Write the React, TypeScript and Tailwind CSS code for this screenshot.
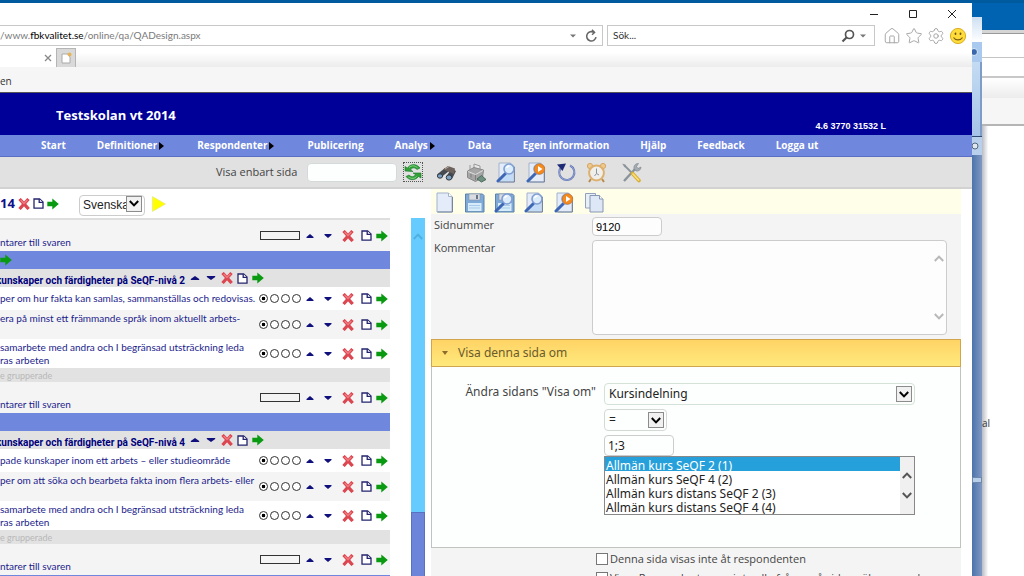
import React, { useState } from 'react';
import { Home, Settings, Star } from 'lucide-react';

type IconProps = { className?: string };

function DeleteIcon() {
  return (
    <svg width="12" height="12" viewBox="0 0 12 12">
      <path d="M2.6 2.2 9.6 9.8M9.4 2.2 2.6 9.8" stroke="#dc4650" strokeWidth="3.2" strokeLinecap="square" />
      <path d="M2.6 2 6 5.4 9.4 2" stroke="#f07a80" strokeWidth="1.4" fill="none" />
    </svg>
  );
}

function PageIcon() {
  return (
    <svg width="11" height="11" viewBox="0 0 11 11" fill="#fff" stroke="#24246e" strokeWidth="1.3">
      <path d="M1 1h5.6L10 4v6.2H1z" />
      <path d="M6.2 1v3.4H10" />
    </svg>
  );
}

function ArrowIcon() {
  return (
    <svg width="12" height="12" viewBox="0 0 12 12">
      <path d="M.3 3.800h5V.5L11.800 6l-6.500 5.500V8.200h-5z" fill="#0a9a12" />
    </svg>
  );
}

function UpIcon({ className = '' }: IconProps) {
  return (
    <svg width="10" height="4" viewBox="0 0 10 4" preserveAspectRatio="none" className={className}>
      <path d="M5 0 8.5 3v1h-7V3z" fill="#10107c" />
    </svg>
  );
}

function DownIcon({ className = '' }: IconProps) {
  return (
    <svg width="10" height="4" viewBox="0 0 10 4" preserveAspectRatio="none" className={className}>
      <path d="M5 4 8.5 1V0h-7v1z" fill="#10107c" />
    </svg>
  );
}

function Chevron({ up = false, className = '' }: IconProps & { up?: boolean }) {
  return (
    <svg width="10" height="7" viewBox="0 0 10 7" fill="none" stroke="currentColor" strokeWidth="2" className={className}>
      <path d={up ? 'M.8 6 5 1.6 9.2 6' : 'M.8 1 5 5.4 9.2 1'} />
    </svg>
  );
}

function Sheet() {
  return (
    <>
      <path d="M3 1h11.5L18 4.5V20H3z" fill="#e3ecf8" stroke="#a4b2cb" />
      <path d="M14.5 1v3.5H18" fill="#fff" stroke="#a4b2cb" />
      <path d="M3.5 20H18.5V5" fill="none" stroke="#77869f" />
    </>
  );
}

function Lens() {
  return (
    <>
      <path d="M9.5 11.5 2 19" stroke="#3d67b5" strokeWidth="3" strokeLinecap="round" />
      <circle cx="13" cy="7" r="5" fill="#dcecfb" stroke="#7f9ed4" strokeWidth="1.6" />
      <path d="M10.5 6a3 3 0 0 1 3-2" fill="none" stroke="#fff" strokeWidth="1.4" />
    </>
  );
}

function Floppy() {
  return (
    <>
      <path d="M1.5 2h17L20 3.5V20H1.5z" fill="#7fa9d6" stroke="#5b82ae" />
      <path d="M5 2h11v6H5z" fill="#d9dde2" stroke="#8796a8" strokeWidth=".6" />
      <path d="M12 3h2v4h-2z" fill="#6a7480" />
      <path d="M4 11h13.500v8H4z" fill="#d7ecfa" />
      <path d="M5 13.500h11M5 16h11" stroke="#a7cbe8" />
    </>
  );
}

function ToolSvg({ children }: { children: React.ReactNode }) {
  return (
    <svg width="21" height="21" viewBox="0 0 21 21" fill="none">
      {children}
    </svg>
  );
}

const PREVIEW = (
  <ToolSvg>
    <Sheet />
    <path d="M5 18 12 11h5v8H5z" fill="#c2dcf7" />
    <Lens />
  </ToolSvg>
);

const PREVIEW_PLAY = (
  <ToolSvg>
    <Sheet />
    <Lens />
    <circle cx="13.500" cy="7" r="5.200" fill="#f58a1f" stroke="#cf6f17" strokeWidth=".6" />
    <path d="M12 4v6l4.500-3z" fill="#fff" />
  </ToolSvg>
);

const MAIN_TOOLS = [
  {
    name: 'Sök',
    icon: (
      <ToolSvg>
        <path d="M1 12.500 9 6l4 3-7.500 6zM10 15l5.500-8.500L20 9l-4 8z" fill="#454b52" />
        <path d="M7 7.500 12 4l7 2.500-1 5.500z" fill="#6d625c" />
        <path d="M9 7l4-2.500" stroke="#b9a89b" />
        <ellipse cx="4" cy="14" rx="2.600" ry="2.200" fill="#7ba2c4" stroke="#33383e" />
        <ellipse cx="13" cy="15.500" rx="2.800" ry="2.600" fill="#7ba2c4" stroke="#33383e" />
      </ToolSvg>
    ),
  },
  {
    name: 'Skriv ut',
    icon: (
      <ToolSvg>
        <path d="M8 2 14 4v6l-6-1z" fill="#e8e8e8" stroke="#999" />
        <path d="M1.500 9 8 5.500 17.500 8l-1 7.500-7 4-8-4z" fill="#a6a6a6" stroke="#888" />
        <path d="M2 9.500l7.500 3 7.500-4" stroke="#ddd" />
        <path d="M5 12v3.500M9.500 13v5" stroke="#7d7d7d" />
        <path d="M11 17l4.500-3.500 4.500 4-4.500 2.500z" fill="#6e9181" stroke="#4d6b5c" />
        <path d="M4 3v5" stroke="#999" />
      </ToolSvg>
    ),
  },
  { name: 'Förhandsgranska', icon: PREVIEW },
  { name: 'Spela upp', icon: PREVIEW_PLAY },
  {
    name: 'Ångra',
    icon: (
      <ToolSvg>
        <path d="M6 4.500a7.600 7.600 0 1 0 8-1" stroke="#6478b6" strokeWidth="2" />
        <path d="M6 4.500a7.600 7.600 0 1 0 8-1" stroke="#aebce2" strokeWidth=".6" />
        <path d="M1 2.500 10 1.500 6.500 9z" fill="#1f2b75" />
      </ToolSvg>
    ),
  },
  {
    name: 'Tid',
    icon: (
      <ToolSvg>
        <path d="M5 17 3 20M16 17l2 3" stroke="#b98c4c" strokeWidth="2" />
        <circle cx="4" cy="4" r="2.600" fill="#efc88d" stroke="#d3a665" />
        <circle cx="17" cy="4" r="2.600" fill="#efc88d" stroke="#d3a665" />
        <circle cx="10.500" cy="11" r="7.400" fill="#f1efe9" stroke="#ddb070" strokeWidth="2" />
        <path d="M10.500 6.500v5l-2 2.500M10.500 11.500l2.500 1.500" stroke="#8d93a5" />
      </ToolSvg>
    ),
  },
];

const PAGE_TOOLS = [
  { name: 'Ny', icon: <ToolSvg><Sheet /></ToolSvg> },
  { name: 'Spara', icon: <ToolSvg><Floppy /></ToolSvg> },
  { name: 'Spara och visa', icon: <ToolSvg><Floppy /><Lens /></ToolSvg> },
  { name: 'Visa', icon: PREVIEW },
  { name: 'Visa och kör', icon: PREVIEW_PLAY },
  {
    name: 'Kopiera',
    icon: (
      <ToolSvg>
        <path d="M1.500 1.500h10V16h-10z" fill="#e9eff9" stroke="#93a2bc" />
        <path d="M6 3.500h9.500L19 7v13H6z" fill="#dde7f6" stroke="#8796b2" />
        <path d="M15.500 3.500V7H19" fill="#fff" stroke="#8796b2" />
      </ToolSvg>
    ),
  },
];

const MENU = [
  { label: 'Start' },
  { label: 'Definitioner', sub: true },
  { label: 'Respondenter', sub: true },
  { label: 'Publicering' },
  { label: 'Analys', sub: true },
  { label: 'Data' },
  { label: 'Egen information' },
  { label: 'Hjälp' },
  { label: 'Feedback' },
  { label: 'Logga ut' },
];

type Row = {
  kind: 'bar' | 'head' | 'comment' | 'single' | 'double' | 'group';
  text?: string;
  shaded?: boolean;
  arrow?: boolean;
};

const ROWS: Row[] = [
  { kind: 'comment', text: 'ntarer till svaren' },
  { kind: 'bar', arrow: true },
  { kind: 'head', text: 'kunskaper och färdigheter på SeQF-nivå 2' },
  { kind: 'single', text: 'per om hur fakta kan samlas, sammanställas och redovisas.' },
  { kind: 'double', text: 'era på minst ett främmande språk inom aktuellt arbets-', shaded: true },
  { kind: 'double', text: 'samarbete med andra och I begränsad utsträckning leda\nras arbeten' },
  { kind: 'group', text: 'e grupperade' },
  { kind: 'comment', text: 'ntarer till svaren' },
  { kind: 'bar' },
  { kind: 'head', text: 'kunskaper och färdigheter på SeQF-nivå 4' },
  { kind: 'single', text: 'pade kunskaper inom ett arbets – eller studieområde' },
  { kind: 'double', text: 'per om att söka och bearbeta fakta inom flera arbets- eller', shaded: true },
  { kind: 'double', text: 'samarbete med andra och I begränsad utsträckning leda\nras arbeten' },
  { kind: 'group', text: 'e grupperade' },
  { kind: 'comment', text: 'ntarer till svaren' },
  { kind: 'bar' },
];

const COURSES = [
  'Allmän kurs SeQF 2 (1)',
  'Allmän kurs SeQF 4 (2)',
  'Allmän kurs distans SeQF 2 (3)',
  'Allmän kurs distans SeQF 4 (4)',
];

function RowTools({ id, comment }: { id: number; comment?: boolean }) {
  return (
    <div className="grid shrink-0 grid-cols-[42px_18px_18px_22px_14px_17px] place-items-center">
      {comment ? (
        <input aria-label="Kommentar till svaren" className="h-[9px] w-10 border border-[#333] bg-transparent" />
      ) : (
        <div className="flex gap-[2px]">
          {[0, 1, 2, 3].map((n) => (
            <input
              key={n}
              type="radio"
              name={`fraga-${id}`}
              aria-label={`Alternativ ${n + 1}`}
              defaultChecked={n === 0}
              className="size-[9px] appearance-none rounded-full border border-[#333] bg-white checked:bg-[radial-gradient(#000_30%,#fff_42%)]"
            />
          ))}
        </div>
      )}
      <button aria-label="Upp"><UpIcon className="block" /></button>
      <button aria-label="Ned"><DownIcon className="block" /></button>
      <button aria-label="Ta bort"><DeleteIcon /></button>
      <button aria-label="Kopiera"><PageIcon /></button>
      <button aria-label="Öppna"><ArrowIcon /></button>
    </div>
  );
}

function ListRow({ row, id }: { row: Row; id: number }) {
  if (row.kind === 'bar') {
    return (
      <li className="flex h-[18px] items-center bg-[#6f87dc]">
        {row.arrow && <button aria-label="Öppna"><ArrowIcon /></button>}
      </li>
    );
  }
  if (row.kind === 'head') {
    return (
      <li className="flex h-[18px] items-center bg-[#e2e2e2] font-['Roboto',sans-serif] font-bold text-[#00007c]">
        <span className="-ml-1 pt-1">{row.text}</span>
        <div className="ml-1 flex items-center gap-1">
          <UpIcon className="w-3" />
          <DownIcon className="w-3" />
          <button aria-label="Ta bort"><DeleteIcon /></button>
          <button aria-label="Kopiera"><PageIcon /></button>
          <button aria-label="Öppna"><ArrowIcon /></button>
        </div>
      </li>
    );
  }
  if (row.kind === 'group') {
    return <li className="flex h-[14px] items-center bg-[#e2e2e2] text-[9px] text-[#b8b8b8]">{row.text}</li>;
  }
  if (row.kind === 'comment') {
    return (
      <li className="flex h-[31px] items-center justify-between bg-[#f4f4f4]">
        <span className="self-end pb-[2px]">{row.text}</span>
        <RowTools id={id} comment />
      </li>
    );
  }
  if (row.kind === 'single') {
    return (
      <li className="flex h-[23px] items-center justify-between bg-white">
        <span>{row.text}</span>
        <RowTools id={id} />
      </li>
    );
  }
  return (
    <li className={`flex h-[29px] items-center justify-between ${row.shaded ? 'bg-[#f4f4f4]' : 'bg-white'}`}>
      <span className="self-start whitespace-pre pt-[2px]">{row.text}</span>
      <RowTools id={id} />
    </li>
  );
}

function SelectArrow() {
  return (
    <span className="pointer-events-none absolute inset-y-0 right-[3px] flex items-center">
      <span className="flex size-4 items-center justify-center border border-[#8c8c8c] bg-[#f1f1f1] text-black">
        <Chevron />
      </span>
    </span>
  );
}

function BrowserChrome() {
  return (
    <header className="bg-white">
      <div className="flex h-[22px] items-center justify-end gap-[29px] pr-[15px] text-[#222]">
        <button aria-label="Minimera">
          <svg width="10" height="10" viewBox="0 0 10 10"><path d="M1 5.500h8" stroke="currentColor" /></svg>
        </button>
        <button aria-label="Maximera">
          <svg width="10" height="10" viewBox="0 0 10 10"><path d="M1.500 1.500h7v7h-7z" fill="none" stroke="currentColor" /></svg>
        </button>
        <button aria-label="Stäng">
          <svg width="10" height="10" viewBox="0 0 10 10"><path d="m1 1 8 8M9 1 1 9" stroke="currentColor" /></svg>
        </button>
      </div>
      <div className="flex h-[21px] gap-1 pr-[5px] font-['Lato',sans-serif] text-[10px]">
        <div className="flex flex-1 items-center border border-l-0 border-[#c8c8c8] text-[#7a7a7a]">
          <span className="flex-1">/www.<span className="text-black">fbkvalitet.se</span>/online/qa/QADesign.aspx</span>
          <svg width="6" height="4" viewBox="0 0 6 4" className="mr-2"><path d="M0 .5h6L3 3.500z" fill="#777" /></svg>
          <button aria-label="Uppdatera" className="mr-1">
            <svg width="14" height="14" viewBox="0 0 14 14" fill="none" stroke="#666" strokeWidth="1.600">
              <path d="M12 8.200A4.700 4.700 0 1 1 10 3.400" />
              <path d="M8 .8 10.600 3.500 8 5.800" strokeWidth="1.400" />
            </svg>
          </button>
        </div>
        <div className="flex w-[268px] items-center border border-[#c8c8c8] pl-[5px]">
          <input aria-label="Sök" placeholder="Sök..." className="min-w-0 flex-1 placeholder:text-[#333]" />
          <button aria-label="Sök" className="mr-[5px]">
            <svg width="14" height="14" viewBox="0 0 14 14" fill="none" stroke="#555">
              <circle cx="8.500" cy="5.500" r="4" strokeWidth="1.700" />
              <path d="M5.500 8.500 1.500 12.500" strokeWidth="2.200" />
            </svg>
          </button>
          <svg width="6" height="4" viewBox="0 0 6 4" className="mr-2"><path d="M0 .5h6L3 3.500z" fill="#777" /></svg>
        </div>
        <div className="ml-1 flex items-center gap-1 text-[#a5a5a5]">
          <button aria-label="Hem"><Home size={18} strokeWidth={1.3} /></button>
          <button aria-label="Favoriter"><Star size={18} strokeWidth={1.3} /></button>
          <button aria-label="Verktyg"><Settings size={18} strokeWidth={1.3} /></button>
          <button aria-label="Feedback">
            <svg width="18" height="18" viewBox="0 0 18 18">
              <circle cx="9" cy="9" r="7.600" fill="#ffdc3a" stroke="#d9ae22" />
              <ellipse cx="6.500" cy="6.800" rx=".9" ry="1.300" fill="#6b5310" />
              <ellipse cx="11.500" cy="6.800" rx=".9" ry="1.300" fill="#6b5310" />
              <path d="M4.500 10.500c1.800 3.200 7.200 3.200 9 0" fill="none" stroke="#7d6110" strokeWidth="1.100" />
            </svg>
          </button>
        </div>
      </div>
      <div className="flex h-[21px] items-end bg-gradient-to-b from-white from-30% to-[#ececec]">
        <div className="flex h-[19px] w-14 items-center justify-end bg-white pr-1">
          <button aria-label="Stäng flik">
            <svg width="8" height="8" viewBox="0 0 8 8"><path d="m1 1 6 6M7 1 1 7" stroke="#888" strokeWidth="1.300" /></svg>
          </button>
        </div>
        <button aria-label="Ny flik" className="flex h-[19px] w-5 items-center justify-center border border-b-0 border-[#b5b5b5] bg-[#d9d9d9]">
          <svg width="11" height="12" viewBox="0 0 11 12">
            <path d="M1 2h6l2 3v6H1z" fill="#fff" stroke="#aaa" />
            <circle cx="8.500" cy="2.500" r="2" fill="#e4b45a" />
          </svg>
        </button>
      </div>
      <div className="flex h-[26px] items-center border-b border-[#555] bg-[#f6f6f6] pt-1 text-[10px] text-[#333]">en</div>
    </header>
  );
}

function SiteHeader() {
  return (
    <>
      <div className="flex h-[42px] items-center justify-between bg-[#000099] pl-14 pr-[86px] text-white">
        <h1 className="pt-[3px] text-[13px] font-bold">Testskolan vt 2014</h1>
        <span className="self-end pb-[3px] font-['Liberation_Sans',sans-serif] text-[9px] font-bold leading-[11px]">4.6 3770 31532 L</span>
      </div>
      <nav className="flex h-[22px] items-center gap-[31px] border-b border-[#5a6fc4] bg-[#6f87dc] pl-[41px] text-[10px] font-bold text-white">
        {MENU.map((m) => (
          <a key={m.label} href="#" className="flex items-center whitespace-nowrap">
            {m.label}
            {m.sub && (
              <svg width="5" height="8" viewBox="0 0 5 8" className="mx-[2px]"><path d="M0 0 5 4 0 8z" fill="#000" /></svg>
            )}
          </a>
        ))}
      </nav>
      <div className="flex h-8 items-center border-b-2 border-[#d2d2d2] bg-[#e1e1e1] pl-[216px] text-[#444]">
        <label htmlFor="visa-sida" className="w-[91px] whitespace-nowrap text-[11px]">Visa enbart sida</label>
        <input id="visa-sida" className="h-[19px] w-[90px] rounded border border-[#d4dada] bg-[#fcfffe] px-1" />
        <button aria-label="Uppdatera" className="ml-[6px] border border-dotted border-[#555]">
          <svg width="18" height="18" viewBox="0 0 18 18">
            <path d="M1 8V3.500L3.500 5C7 0 13 1 16 5l-3 1.500C10.500 4 8 4.500 6.500 7L9 8.500z" fill="#31a137" stroke="#187324" strokeWidth=".6" />
            <path d="M17 10v5l-2.500-1.500C11 18 5 17.500 2 13.500L5 12c2.500 2.500 5 2 6.500-.5L9 10z" fill="#31a137" stroke="#187324" strokeWidth=".6" />
            <path d="M5 4.500c3-2.500 6-2 8.500.3M4.500 14c3 2 6 1.800 8-.5" fill="none" stroke="#8bd58c" />
          </svg>
        </button>
        <div className="ml-[13px] flex gap-[9px]">
          {MAIN_TOOLS.map((t) => (
            <button key={t.name} aria-label={t.name}>{t.icon}</button>
          ))}
        </div>
        <button aria-label="Inställningar" className="ml-[14px]">
          <ToolSvg>
            <path d="M3 19 14.500 6.500" stroke="#8b949b" strokeWidth="2.400" />
            <path d="M13 6.500c-.5-3 1.500-5 4.500-5l-2 3 1.500 2 3-1.500c0 3-2.500 4.500-5 4z" fill="#a5adb3" stroke="#77818a" strokeWidth=".6" />
            <path d="M3 3 12 12" stroke="#8b949b" strokeWidth="1.800" />
            <path d="M11.500 11.500 18 18.500" stroke="#d7ad32" strokeWidth="3.600" strokeLinecap="round" />
            <path d="M11.500 11.500 18 18.500" stroke="#fbe27d" strokeWidth="1.600" />
            <path d="M1 1.500 5 3 4 5.500z" fill="#8b949b" />
          </ToolSvg>
        </button>
      </div>
    </>
  );
}

function ListPane() {
  return (
    <section className="flex w-[425px] shrink-0 overflow-hidden">
      <div className="w-[390px] shrink-0">
        <div className="flex h-[29px] items-center text-[#10108a]">
          <b className="w-[18px] text-[13px]">14</b>
          <div className="flex items-center gap-[3px]">
            <button aria-label="Ta bort"><DeleteIcon /></button>
            <button aria-label="Kopiera"><PageIcon /></button>
            <button aria-label="Öppna"><ArrowIcon /></button>
          </div>
          <div className="relative ml-5">
            <select
              aria-label="Språk"
              className="h-[21px] w-[66px] appearance-none rounded border border-[#ccc] bg-white pl-[3px] font-['Liberation_Sans',sans-serif] text-[12px] text-[#222]"
            >
              <option>Svenska</option>
            </select>
            <SelectArrow />
          </div>
          <button aria-label="Spela upp" className="ml-[7px]">
            <svg width="14" height="16" viewBox="0 0 14 16"><path d="M.5.500 13.500 8 .5 15.500z" fill="#ffff00" stroke="#e2e28e" strokeWidth=".6" /></svg>
          </button>
        </div>
        <ul className="whitespace-nowrap border-t-2 border-[#dedede] font-['Lato',sans-serif] text-[10px] leading-[13px] text-[#1c1c8c]">
          {ROWS.map((row, i) => (
            <ListRow key={i} row={row} id={i} />
          ))}
        </ul>
      </div>
      <div className="ml-auto mt-[29px] flex w-[14px] flex-col bg-[#66ccff]">
        <div className="flex h-[294px] shrink-0 justify-center pt-[15px] text-[#4fb0e0]">
          <Chevron up />
        </div>
        <div className="flex-1 border border-b-0 border-[#5a70c0] bg-[#6c85db]" />
      </div>
    </section>
  );
}

function DetailPane() {
  const [open, setOpen] = useState(true);

  return (
    <section className="ml-[6px] mr-[11px] flex-1 bg-[#f4f4f4] text-[11px] text-[#444]">
      <div className="flex h-[25px] items-center gap-[9px] bg-[#fffee9] pl-[3px] pt-[2px]">
        {PAGE_TOOLS.map((t) => (
          <button key={t.name} aria-label={t.name}>{t.icon}</button>
        ))}
      </div>
      <div className="grid grid-cols-[158px_1fr] gap-y-1 pb-1 pl-[3px] pr-[14px] pt-[3px]">
        <label htmlFor="sidnummer">Sidnummer</label>
        <input
          id="sidnummer"
          defaultValue="9120"
          className="h-[19px] w-[70px] rounded border border-[#ccc] bg-[#fdfdfd] px-[3px] font-['Liberation_Sans',sans-serif] text-[11px] text-black"
        />
        <label htmlFor="kommentar">Kommentar</label>
        <div className="relative">
          <textarea id="kommentar" className="block h-[95px] w-full resize-none rounded border border-[#ccc] bg-[#fdfdfd] px-1" />
          <div className="pointer-events-none absolute inset-y-0 right-[3px] flex flex-col justify-between py-[15px] text-[#b8b8b8]">
            <Chevron up />
            <Chevron />
          </div>
        </div>
      </div>
      <button
        onClick={() => setOpen(!open)}
        className="flex h-[28px] w-full items-center border border-[#d0a54c] bg-gradient-to-b from-[#ffd365] to-[#ffe97c] pl-[10px] text-[12px] text-[#6a5b2c]"
      >
        <svg width="6" height="4" viewBox="0 0 6 4"><path d="M0 0h6L3 4z" fill="#8a6d2c" /></svg>
        <span className="ml-[10px] font-['Noto_Sans',sans-serif]">Visa denna sida om</span>
      </button>
      {open && (
        <div className="flex h-[181px] gap-2 border border-t-0 border-[#c0c4c0] bg-[#fdfffe] pt-4 pr-[45px] font-['Noto_Sans',sans-serif] text-[12px]">
          <label htmlFor="visa-om" className="w-[164px] whitespace-nowrap text-right">Ändra sidans &quot;Visa om&quot;</label>
          <div className="flex flex-1 flex-col items-start text-[#222]">
            <div className="relative w-full">
              <select id="visa-om" className="h-[22px] w-full appearance-none rounded border border-[#d5e2d8] bg-[#fdfffe] pl-1">
                <option>Kursindelning</option>
              </select>
              <SelectArrow />
            </div>
            <div className="relative mt-1">
              <select aria-label="Villkor" className="h-[22px] w-[63px] appearance-none rounded border border-[#d5d9d6] bg-[#fdfffe] pl-1">
                <option>=</option>
              </select>
              <SelectArrow />
            </div>
            <input aria-label="Värde" defaultValue="1;3" className="mt-1 h-[21px] w-[70px] rounded border border-[#ccc] bg-[#fdfffe] px-[3px]" />
            <div className="relative w-full">
              <select
                aria-label="Kurser"
                size={4}
                defaultValue={COURSES[0]}
                className="block h-[59px] w-full overflow-hidden border border-[#888] bg-white"
              >
                {COURSES.map((c) => (
                  <option
                    key={c}
                    className="h-[14px] min-h-0 px-[1px] py-0 leading-[13px] checked:bg-[linear-gradient(#26a0da,#26a0da)] checked:text-white!"
                  >
                    {c}
                  </option>
                ))}
              </select>
              <div className="pointer-events-none absolute inset-y-px right-px flex w-[14px] flex-col items-center justify-center gap-[13px] bg-[#f0f0f0] text-[#555]">
                <Chevron up />
                <Chevron />
              </div>
            </div>
          </div>
        </div>
      )}
      <div className="flex flex-col gap-[3px] whitespace-nowrap pl-[165px] pt-[3px] leading-4">
        {['Denna sida visas inte åt respondenten', 'Vissa Respondenter ser inte alla frågor på sidan söker man de'].map((text) => (
          <label key={text} className="flex items-center gap-[2px]">
            <input type="checkbox" className="size-3 appearance-none border border-[#777] bg-white checked:bg-[#6f87dc]" />
            {text}
          </label>
        ))}
      </div>
    </section>
  );
}

function BackgroundWindows() {
  return (
    <aside className="flex w-[52px] shrink-0 overflow-hidden bg-[#0063b1]">
      <div className="flex w-[10px] flex-col pt-[14px]">
        <div className="h-[25px] bg-gradient-to-b from-[#cfe0f2] to-white" />
        <div className="flex h-5 items-center bg-[#a9c9ee]">
          <svg width="8" height="10" viewBox="0 0 8 10"><circle cx="2" cy="5" r="3.500" fill="#3a68ad" stroke="#dcebfb" /></svg>
        </div>
        <div className="h-[74px] border-r-2 border-[#7d9cc8] bg-gradient-to-b from-[#c4dbf3] to-[#a5c3e8]" />
        <div className="flex h-[19px] items-center border-t border-[#2e4b75] bg-[#b9d0ec]">
          <svg width="8" height="8" viewBox="0 0 8 8"><circle cx="3" cy="4" r="3" fill="#dfe6ee" stroke="#55677f" /></svg>
        </div>
        <div className="h-[322px] bg-gradient-to-r from-[#4c74ab] to-[#7f98c2]" />
        <div className="h-[6px] border border-[#6d87ad] bg-[#b7cfe8]" />
        <div className="flex-1 bg-gradient-to-r from-[#4c74ab] to-[#7f98c2]" />
      </div>
      <div className="flex flex-1 flex-col pt-[27px] text-[10px] text-[#333]">
        <div className="h-1 border-b border-[#999] bg-[#d5d5d5]" />
        <div className="h-6 border-b border-[#c4c4c4] bg-white" />
        <div className="h-5 border-b-2 border-[#c8c8c8] bg-white" />
        <div className="h-5 bg-gradient-to-b from-white to-[#ececec]" />
        <div className="h-[28px] border-b-2 border-[#b5b5b5] bg-[#f6f6f6]" />
        <div className="flex-1 bg-gradient-to-r from-[#b9bcc4] to-white to-15% pt-[290px]">al</div>
      </div>
    </aside>
  );
}

function App() {
  return (
    <div className="flex h-screen overflow-hidden border-t-3 border-[#005a9e] font-['Open_Sans',sans-serif]">
      <main className="flex min-w-0 flex-1 flex-col overflow-hidden bg-white">
        <BrowserChrome />
        <SiteHeader />
        <div className="flex min-h-0 flex-1 overflow-hidden">
          <ListPane />
          <DetailPane />
        </div>
      </main>
      <BackgroundWindows />
    </div>
  );
}

export default App;
